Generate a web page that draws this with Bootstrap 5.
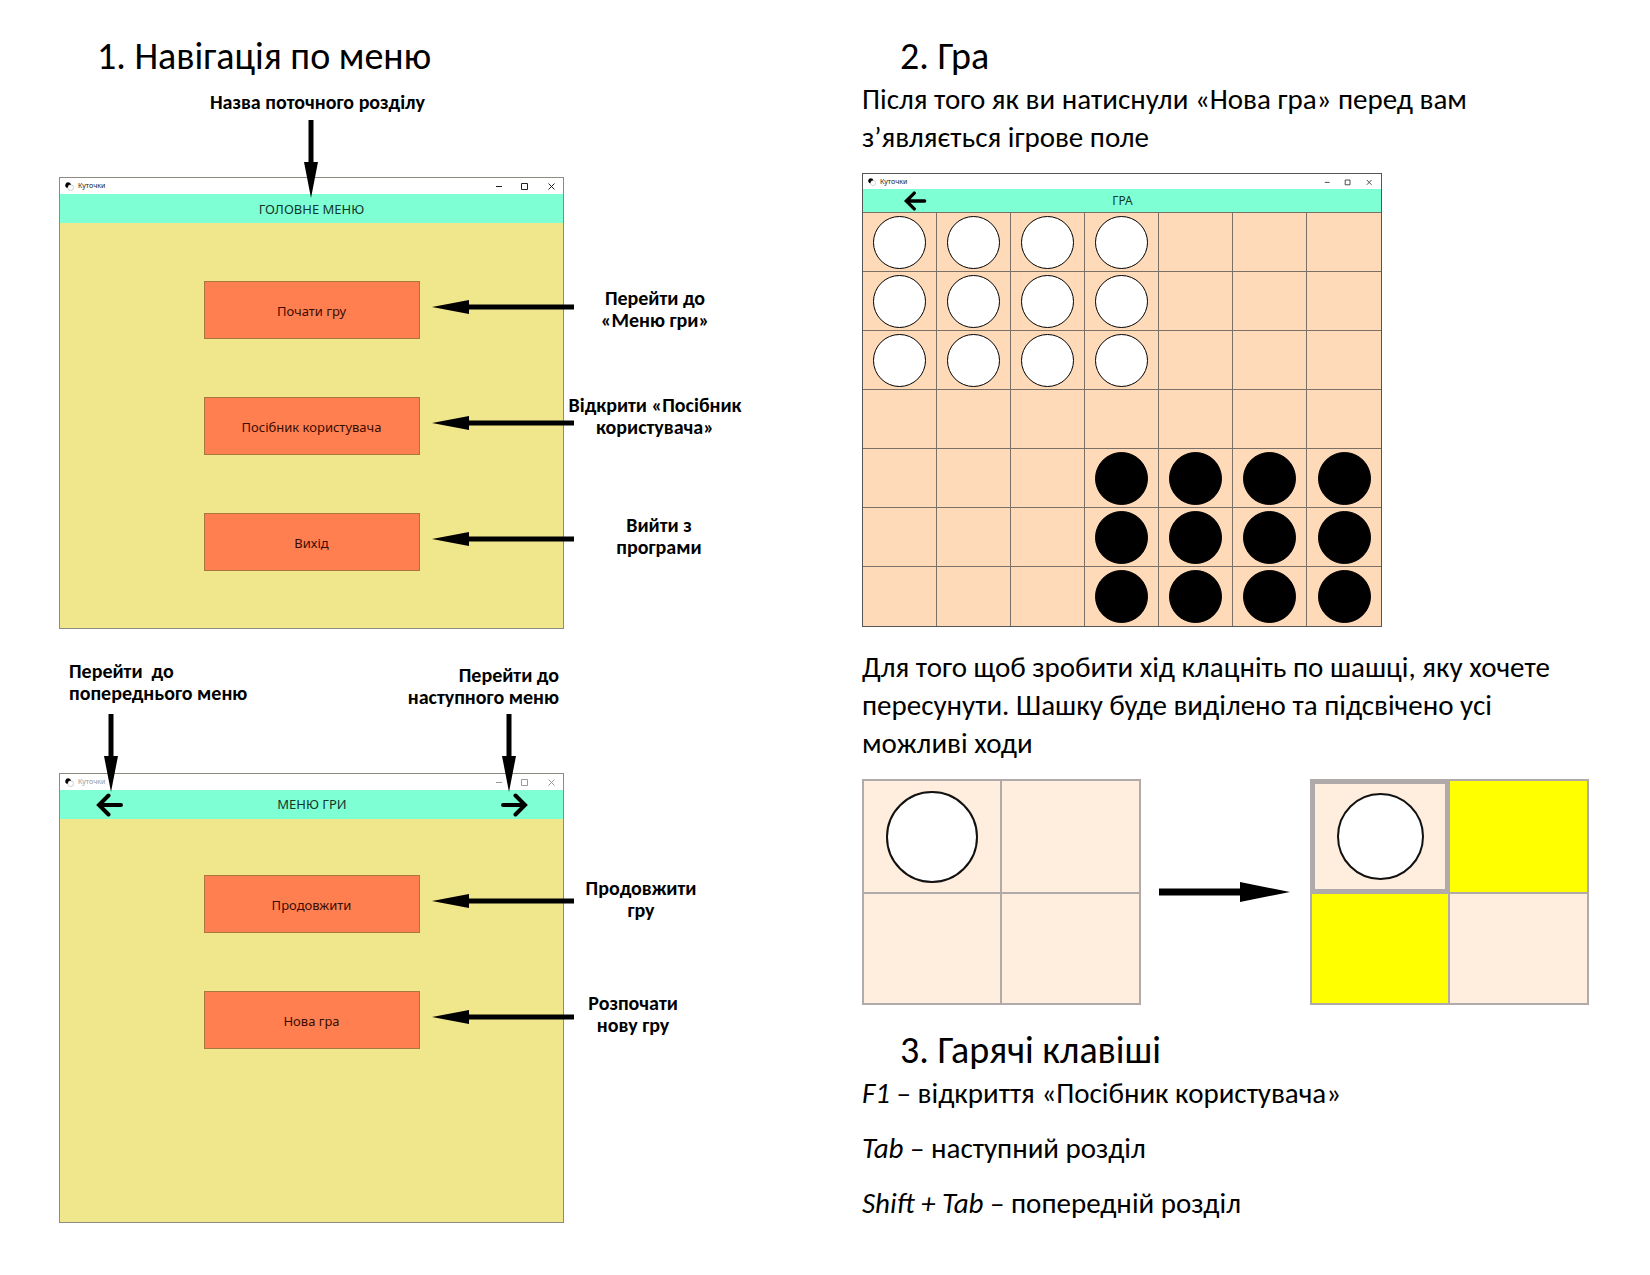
<!DOCTYPE html>
<html lang="uk">
<head>
<meta charset="utf-8">
<meta name="viewport" content="width=device-width, initial-scale=1">
<title>Куточки – посібник користувача</title>
<link href="https://cdn.jsdelivr.net/npm/bootstrap@5.3.0/dist/css/bootstrap.min.css" rel="stylesheet">
<style>
body { font-family: Carlito, Calibri, Lato, sans-serif; color: #000; background: #fff; }
.guide-left { padding: 32px 0 32px 59px; }
.guide-right { padding: 32px 24px 32px 37px; }
.guide-title { font-size: 38px; line-height: 48px; font-weight: 400; margin: 0; padding-left: 38px; }
.guide-text { font-size: 29px; line-height: 38px; margin: 0; }
.guide-block { margin: 17px 0 21px; }
.keys-list { gap: 17px; }

/* captions beside and above the app windows */
.caption-text { font-size: 20px; line-height: 22px; font-weight: 700; margin: 0; }
.figure-col { width: 505px; }
.caption-top { padding: 11px 0 64px 12px; }
.caption-pair { padding: 31px 5px 65px 10px; }
.caption-lower { padding-top: 4px; }
.captions { width: 178px; padding-left: 4px; }
.captions-main { padding-top: 110px; gap: 63px; }
.captions-main .caption-text:last-child { padding: 13px 0 0 8px; }
.captions-game { padding: 104px 40px 0 0; gap: 71px; }

/* app window */
.app-window { width: 505px; border: 1px solid #8b8b80; font-family: "Noto Sans", sans-serif; background: #f0e68c; }
.title-bar { height: 16px; padding: 0 8px 0 5px; background: #fff; font-size: 7px; line-height: 16px; color: #222; }
.title-bar-idle { color: #999; }
.section-bar { height: 29px; background: #7fffd4; font-size: 13px; color: #12382c; padding-top: 2px; }
.nav-arrow { border: 0; background: none; padding: 0; line-height: 0; }
.game-bar { padding: 1px 35px 0 36px; }
.menu-area { padding: 58px 0 57px; gap: 58px; }
.menu-area-game { padding: 56px 0 173px; }
.menu-btn { width: 216px; height: 58px; border: 1px solid #a8783f; border-radius: 0; background: #ff7f50; color: #3a0c00; font-size: 13px; padding-top: 4px; }
.pointer-left { left: 228px; top: 18px; }
.pointer-down { top: -58px; left: 50%; margin-left: -9px; }
.pointer-prev { top: -60px; left: 43px; }
.pointer-next { top: -60px; right: 46px; }

/* game board */
.board-window { width: 520px; border-color: #555; background: #ffdab9; }
.board-window .title-bar { height: 15px; line-height: 15px; }
.board-window .section-bar { height: 24px; font-size: 12px; padding: 0 40px; border-bottom: 1px solid #7a7066; }
.board-grid { display: grid; grid-template-columns: repeat(7, 1fr); grid-auto-rows: 59px; }
.square { border: 0 solid #7a7066; border-width: 0 1px 1px 0; }
.square:nth-child(7n) { border-right: 0; }
.square:nth-child(n+43) { border-bottom: 0; }
.checker { width: 53px; height: 53px; border-radius: 50%; border: 1px solid #000; }
.checker-white { background: #fff; }
.checker-black { background: #000; }

/* move example */
.mini-board { display: grid; grid-template-columns: 136px 1fr; grid-template-rows: 111px 109px; gap: 2px; padding: 2px; width: 279px; background: #b0aaaa; }
.mini-square { background: #ffeddd; }
.mini-chosen { box-shadow: 0 0 0 3px #b0aaaa inset; }
.mini-open { background: #ffff00; }
.mini-checker { width: 92px; height: 92px; border: 2px solid #111; border-radius: 50%; background: #fff; }
.mini-chosen .mini-checker { width: 87px; height: 87px; }
.move-gap { width: 169px; padding-right: 2px; }
</style>
</head>
<body>
<svg class="d-none" aria-hidden="true">
  <symbol id="logo" viewBox="0 0 10 10"><circle cx="6.300" cy="6.300" r="3.200" fill="#fff" stroke="#aaa" stroke-width=".6"/><path d="M3.500.3a3.300 3.300 0 0 0-1.800 6c1 .6 1.700-.2 1.600-1.300C3.300 3.600 4.600 2.900 6.700 3 6.400 1.300 5 .3 3.500.3z"/></symbol>
  <symbol id="win" viewBox="0 0 60 10"><path d="M1 5.500h6M26.500 2.500h6v6h-6zM53.500 2.500l6 6m0-6l-6 6" fill="none" stroke="currentColor"/></symbol>
  <symbol id="arrow-back" viewBox="0 0 28 24"><path d="M25 12H4M12.500 2.500L3 12l9.500 9.500" fill="none" stroke="#000" stroke-width="4" stroke-linecap="round"/></symbol>
  <symbol id="arrow-next" viewBox="0 0 28 24"><path d="M3 12h21M15.500 2.500L25 12l-9.500 9.500" fill="none" stroke="#000" stroke-width="4" stroke-linecap="round"/></symbol>
  <symbol id="point-left" viewBox="0 0 142 16"><path d="M0 8L37 1v4.500H142v5H37V15z"/></symbol>
  <symbol id="point-down" viewBox="0 0 16 78"><path d="M5.500 0h5v42H15L8 78 1 42h4.500z"/></symbol>
</svg>

<main class="container-fluid p-0">
<div class="row g-0">

  <section class="col-6 guide-left">
    <h1 class="guide-title">1. Навігація по меню</h1>

    <p class="figure-col caption-text caption-top text-center">Назва поточного розділу</p>
    <div class="d-flex">
      <div class="app-window position-relative flex-shrink-0">
        <div class="title-bar d-flex align-items-center justify-content-between">
          <span class="d-flex align-items-center gap-1"><svg width="9" height="9"><use href="#logo"/></svg>Куточки</span>
          <svg width="60" height="10"><use href="#win"/></svg>
        </div>
        <div class="section-bar d-flex align-items-center justify-content-center">ГОЛОВНЕ МЕНЮ</div>
        <svg class="position-absolute pointer-down" width="16" height="78"><use href="#point-down"/></svg>
        <div class="menu-area d-flex flex-column align-items-center">
          <div class="position-relative"><button type="button" class="menu-btn">Почати гру</button><svg class="position-absolute pointer-left" width="142" height="16"><use href="#point-left"/></svg></div>
          <div class="position-relative"><button type="button" class="menu-btn">Посібник користувача</button><svg class="position-absolute pointer-left" width="142" height="16"><use href="#point-left"/></svg></div>
          <div class="position-relative"><button type="button" class="menu-btn">Вихід</button><svg class="position-absolute pointer-left" width="142" height="16"><use href="#point-left"/></svg></div>
        </div>
      </div>
      <div class="captions captions-main d-flex flex-column text-center text-nowrap">
        <p class="caption-text">Перейти до<br>«Меню гри»</p>
        <p class="caption-text">Відкрити «Посібник<br>користувача»</p>
        <p class="caption-text">Вийти з<br>програми</p>
      </div>
    </div>

    <div class="figure-col caption-pair d-flex justify-content-between">
      <p class="caption-text">Перейти&nbsp; до<br>попереднього меню</p>
      <p class="caption-text caption-lower text-end">Перейти до<br>наступного меню</p>
    </div>
    <div class="d-flex">
      <div class="app-window position-relative flex-shrink-0">
        <div class="title-bar title-bar-idle d-flex align-items-center justify-content-between">
          <span class="d-flex align-items-center gap-1"><svg width="9" height="9"><use href="#logo"/></svg>Куточки</span>
          <svg width="60" height="10"><use href="#win"/></svg>
        </div>
        <div class="section-bar game-bar d-flex align-items-center justify-content-between">
          <button type="button" class="nav-arrow" aria-label="Назад"><svg width="28" height="24"><use href="#arrow-back"/></svg></button>
          <span>МЕНЮ ГРИ</span>
          <button type="button" class="nav-arrow" aria-label="Вперед"><svg width="28" height="24"><use href="#arrow-next"/></svg></button>
        </div>
        <svg class="position-absolute pointer-prev" width="16" height="78"><use href="#point-down"/></svg>
        <svg class="position-absolute pointer-next" width="16" height="78"><use href="#point-down"/></svg>
        <div class="menu-area menu-area-game d-flex flex-column align-items-center">
          <div class="position-relative"><button type="button" class="menu-btn">Продовжити</button><svg class="position-absolute pointer-left" width="142" height="16"><use href="#point-left"/></svg></div>
          <div class="position-relative"><button type="button" class="menu-btn">Нова гра</button><svg class="position-absolute pointer-left" width="142" height="16"><use href="#point-left"/></svg></div>
        </div>
      </div>
      <div class="captions captions-game d-flex flex-column text-center text-nowrap">
        <p class="caption-text ps-3">Продовжити<br>гру</p>
        <p class="caption-text">Розпочати<br>нову гру</p>
      </div>
    </div>
  </section>

  <section class="col-6 guide-right">
    <h1 class="guide-title">2. Гра</h1>
    <p class="guide-text">Після того як ви натиснули «Нова гра» перед вам<br>з’являється ігрове поле</p>

    <div class="app-window board-window guide-block">
      <div class="title-bar d-flex align-items-center justify-content-between">
        <span class="d-flex align-items-center gap-1"><svg width="8" height="8"><use href="#logo"/></svg>Куточки</span>
        <svg width="50" height="8"><use href="#win"/></svg>
      </div>
      <div class="section-bar d-flex align-items-center">
        <button type="button" class="nav-arrow" aria-label="Назад"><svg width="25" height="20"><use href="#arrow-back"/></svg></button>
        <span class="flex-fill text-center pe-4">ГРА</span>
      </div>
      <div class="board-grid" id="board"></div>
    </div>

    <p class="guide-text">Для того щоб зробити хід клацніть по шашці, яку хочете<br>пересунути. Шашку буде виділено та підсвічено усі<br>можливі ходи</p>

    <div class="guide-block d-flex align-items-center">
      <div class="mini-board">
        <div class="mini-square d-flex align-items-center justify-content-center"><div class="mini-checker"></div></div>
        <div class="mini-square"></div>
        <div class="mini-square"></div>
        <div class="mini-square"></div>
      </div>
      <div class="move-gap d-flex justify-content-center">
        <svg width="132" height="22" viewBox="0 0 132 22"><path d="M0 7.500h81V1l50 10-50 10v-6.500H0z"/></svg>
      </div>
      <div class="mini-board">
        <div class="mini-square mini-chosen d-flex align-items-center justify-content-center"><div class="mini-checker"></div></div>
        <div class="mini-square mini-open"></div>
        <div class="mini-square mini-open"></div>
        <div class="mini-square"></div>
      </div>
    </div>

    <h1 class="guide-title">3. Гарячі клавіші</h1>
    <div class="keys-list d-flex flex-column">
      <p class="guide-text"><em>F1</em> – відкриття «Посібник користувача»</p>
      <p class="guide-text"><em>Tab</em> – наступний розділ</p>
      <p class="guide-text"><em>Shift + Tab</em> – попередній розділ</p>
    </div>
  </section>
</div>
</main>
<script src="https://cdn.jsdelivr.net/npm/bootstrap@5.3.0/dist/js/bootstrap.bundle.min.js"></script>
<script>
// Starting position: w = white, b = black, . = empty
const rows = ["wwww...", "wwww...", "wwww...", ".......", "...bbbb", "...bbbb", "...bbbb"];
const board = document.getElementById("board");
for (const cell of rows.join("")) {
  const square = document.createElement("div");
  square.className = "square d-flex align-items-center justify-content-center";
  if (cell !== ".") {
    const checker = document.createElement("div");
    checker.className = "checker " + (cell === "w" ? "checker-white" : "checker-black");
    square.append(checker);
  }
  board.append(square);
}
</script>
</body>
</html>
